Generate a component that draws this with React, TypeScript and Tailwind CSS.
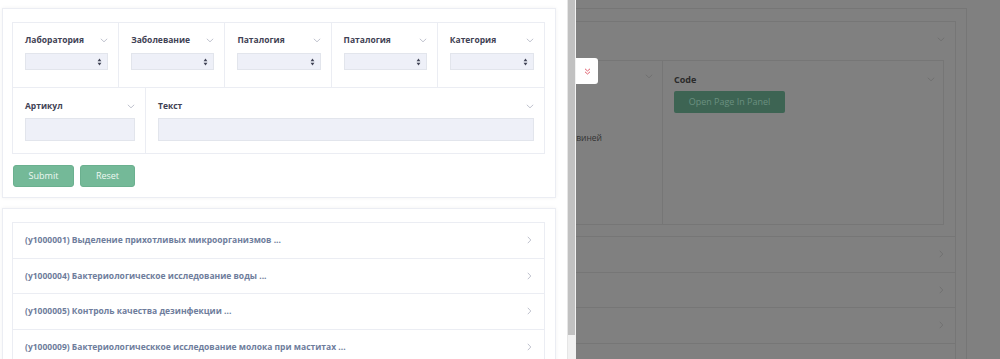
import React from "react";

const ChevronDown = ({ color = "#b9bcc8" }: { color?: string }) => (
  <svg width="8" height="5" viewBox="0 0 8 5" className="shrink-0">
    <polyline points="0.8,0.8 4,3.8 7.2,0.8" fill="none" stroke={color} strokeWidth="0.9" />
  </svg>
);

const ChevronRight = ({ color = "#b9bcc8" }: { color?: string }) => (
  <svg width="5" height="8" viewBox="0 0 5 8" className="shrink-0">
    <polyline points="0.8,0.8 3.8,4 0.8,7.2" fill="none" stroke={color} strokeWidth="0.9" />
  </svg>
);

const SelectArrows = () => (
  <svg width="5" height="8" viewBox="0 0 5 8" className="shrink-0">
    <polygon points="0.6,3.2 2.5,0.6 4.4,3.2" fill="#3f4254" />
    <polygon points="0.6,4.8 2.5,7.4 4.4,4.8" fill="#3f4254" />
  </svg>
);

const SelectCell = ({ label, last }: { label: string; last?: boolean }) => (
  <div className={`h-[65px] border-b border-[#ebedf3] pl-[12px] pr-[10px] pt-[10px] ${last ? "" : "border-r"}`}>
    <div className="flex items-center justify-between h-[14px]">
      <span className="text-[8.5px] font-bold text-[#3f4254] leading-none">{label}</span>
      <ChevronDown />
    </div>
    <div className="mt-[6px] h-[17px] bg-[#eef0f8] border border-[#e2e5ec] flex items-center justify-end pr-[5px]">
      <SelectArrows />
    </div>
  </div>
);

const items = [
  "(y1000001) Выделение прихотливых микроорганизмов ...",
  "(y1000004) Бактериологическое исследование воды ...",
  "(y1000005) Контроль качества дезинфекции ...",
  "(y1000009) Бактериологическкое исследование молока при маститах ...",
];

export default function App() {
  return (
    <div className="flex w-[1000px] h-[359px] overflow-hidden bg-white font-['Open_Sans',sans-serif]">
      {/* Left panel */}
      <div className="w-[567px] shrink-0 pl-[2px] pr-[11px] pt-[8px] flex flex-col gap-[10px]">
        <div className="border border-[#ebedf3] shadow-[0_0_4px_rgba(0,0,0,0.05)] bg-white pl-[9px] pr-[10px] pt-[13px] pb-[10px]">
          <div className="border-l border-t border-r border-[#ebedf3]">
            <div className="grid grid-cols-5">
              <SelectCell label="Лаборатория" />
              <SelectCell label="Заболевание" />
              <SelectCell label="Паталогия" />
              <SelectCell label="Паталогия" />
              <SelectCell label="Категория" last />
            </div>
            <div className="flex">
              <div className="w-[133px] h-[66px] border-r border-b border-[#ebedf3] pl-[12px] pr-[10px] pt-[11px]">
                <div className="flex items-center justify-between h-[14px]">
                  <span className="text-[8.5px] font-bold text-[#3f4254] leading-none">Артикул</span>
                  <ChevronDown />
                </div>
                <div className="mt-[5px] h-[23px] bg-[#eef0f8] border border-[#e2e5ec]" />
              </div>
              <div className="flex-1 h-[66px] border-b border-[#ebedf3] pl-[12px] pr-[10px] pt-[11px]">
                <div className="flex items-center justify-between h-[14px]">
                  <span className="text-[8.5px] font-bold text-[#3f4254] leading-none">Текст</span>
                  <ChevronDown />
                </div>
                <div className="mt-[5px] h-[23px] bg-[#eef0f8] border border-[#e2e5ec]" />
              </div>
            </div>
          </div>
          <div className="flex gap-[6px] mt-[11px] pl-[1px]">
            <button className="w-[61px] h-[22px] rounded-[3px] bg-[#74b998] border border-[#6bb08f] text-[9px] text-[#eef8f2]">
              Submit
            </button>
            <button className="w-[55px] h-[22px] rounded-[3px] bg-[#74b998] border border-[#6bb08f] text-[9px] text-[#eef8f2]">
              Reset
            </button>
          </div>
        </div>
        <div className="flex-1 border border-[#ebedf3] shadow-[0_0_4px_rgba(0,0,0,0.05)] bg-white pl-[9px] pr-[10px] pt-[13px]">
          <div className="border-l border-r border-t border-[#ebedf3]">
            {items.map((t) => (
              <div key={t} className="h-[35.5px] border-b border-[#ebedf3] flex items-center justify-between pl-[12px] pr-[12px]">
                <span className="text-[8.5px] font-bold text-[#6e7d9c] leading-none">{t}</span>
                <ChevronRight />
              </div>
            ))}
          </div>
        </div>
      </div>

      {/* Scrollbar */}
      <div className="w-[9px] shrink-0 bg-[#f1f1f1] border-l border-[#e6e6e6]">
        <div className="h-[335px] w-[7px] bg-[#c1c1c1]" />
      </div>

      {/* Dimmed area */}
      <div className="relative flex-1 overflow-hidden bg-[#808080]">
        <div className="-ml-[30px] mr-[33px] mt-[8px] h-[400px] border border-[#767676]">
          <div className="-ml-[1px] mr-[10px] mt-[12px] h-[400px] border border-[#767676]">
            <div className="h-[38px] flex items-center justify-end pr-[10px] pb-[3px]">
              <ChevronDown color="#6f6f6f" />
            </div>
            <div className="-ml-[1px] mr-[11px] h-[165px] border border-[#767676] flex">
              <div className="w-[116px] border-r border-[#767676] pt-[13px] pr-[9px] flex flex-col items-end">
                <ChevronDown color="#6f6f6f" />
                <div className="self-start w-[55px] mt-[55px] flex justify-end">
                  <span className="whitespace-nowrap text-[8.5px] text-[#333333] leading-none">болезни свиней</span>
                </div>
              </div>
              <div className="flex-1 pl-[11px] pr-[8px] pt-[11px]">
                <div className="flex items-center justify-between h-[14px]">
                  <span className="text-[9px] font-bold text-[#2b2b2b] leading-none">Code</span>
                  <ChevronDown color="#6f6f6f" />
                </div>
                <div className="mt-[5px] w-[111px] h-[22px] rounded-[2px] bg-[#3d6453] flex items-center justify-center">
                  <span className="text-[9px] text-[#6b9080]">Open Page In Panel</span>
                </div>
              </div>
            </div>
            <div className="mt-[11px]">
              {[0, 1, 2, 3].map((i) => (
                <div key={i} className="-ml-[1px] h-[35.5px] border-t border-[#767676] flex items-center justify-end pr-[11px]">
                  {i < 3 && <ChevronRight color="#6f6f6f" />}
                </div>
              ))}
            </div>
          </div>
        </div>
        <div className="absolute left-0 top-[58px] w-[22px] h-[26px] bg-white rounded-r-[3px] flex items-center justify-center">
          <svg width="7" height="7" viewBox="0 0 7 7">
            <polyline points="1,0.8 3.5,3 6,0.8" fill="none" stroke="#e0606e" strokeWidth="1" />
            <polyline points="1,3.8 3.5,6 6,3.8" fill="none" stroke="#e0606e" strokeWidth="1" />
          </svg>
        </div>
      </div>
    </div>
  );
}
